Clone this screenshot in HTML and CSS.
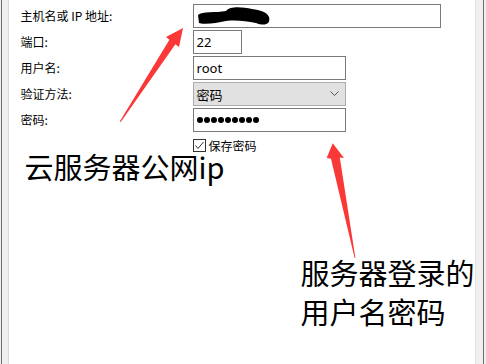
FILE: index.html
```html
<!DOCTYPE html>
<html lang="zh-CN">
<head>
<meta charset="utf-8">
<title>会话设置</title>
<link rel="stylesheet" href="styles.css">
</head>
<body>
<div class="edge-left"></div>
<main class="panel">
  <div class="form">
    <label class="label">主机名或 IP 地址:</label>
    <div class="field field-host">
      <svg class="redact" width="248" height="24" viewBox="0 0 248 24">
        <path d="M4,10 C8,6 22,8 32,6 C36,1 48,2 58,4 C66,5 73,7 75,12 C77,20 70,21 62,18 C52,16 42,15 32,16 C22,18 12,20 5,18 Z" fill="#000"/>
      </svg>
    </div>

    <label class="label">端口:</label>
    <div class="field field-port">22</div>

    <label class="label">用户名:</label>
    <div class="field field-mid">root</div>

    <label class="label">验证方法:</label>
    <div class="field field-mid select">
      <span>密码</span>
      <svg class="chevron" width="9" height="6" viewBox="0 0 9 6"><polyline points="0.5,0.5 4.5,4.5 8.5,0.5" fill="none" stroke="#555" stroke-width="1"/></svg>
    </div>

    <label class="label">密码:</label>
    <div class="field field-mid dots" aria-label="密码">
      <i></i><i></i><i></i><i></i><i></i><i></i><i></i><i></i><i></i>
    </div>
  </div>

  <div class="check-row">
    <svg class="checkbox" width="13" height="13" viewBox="0 0 13 13">
      <rect x="0.5" y="0.5" width="12" height="12" fill="#fff" stroke="#333"/>
      <polyline points="2.5,6.5 5,9.5 10.5,3" fill="none" stroke="#333" stroke-width="1"/>
    </svg>
    <span>保存密码</span>
  </div>

  <p class="note note-ip">云服务器公网ip</p>
  <p class="note note-login">服务器登录的<br>用户名密码</p>

  <svg class="arrows" width="486" height="364" viewBox="0 0 486 364">
    <polygon fill="#fb3838" points="183,28 179,47 175.4,44.2 120.8,122 119.8,121.4 169.4,39.8 166,37"/>
    <polygon fill="#fb3838" points="332.7,143.3 344,158 339.8,157.4 355.4,258 354.6,258 331,158.8 326.7,158"/>
  </svg>
</main>
<div class="edge-right"></div>
</body>
</html>
```

FILE: styles.css
```css
html, body {
  margin: 0;
  padding: 0;
}
body {
  width: 486px;
  height: 364px;
  overflow: hidden;
  display: flex;
  background: #f0f0f0;
  font-family: "Noto Sans CJK SC", "Noto Sans", sans-serif;
  color: #000;
}
.edge-left {
  margin-left: 1px;
  width: 6px;
  border-left: 1px solid #6e6e6e;
  border-right: 1px solid #dadada;
  background: #f0f0f0;
}
.edge-right {
  width: 8px;
  border-left: 1px solid #e3e3e3;
  border-right: 1px solid #6e6e6e;
  margin-right: 2px;
  background: #f0f0f0;
}
.panel {
  flex: 1;
  background: #fff;
  padding: 4px 0 0 12px;
  display: flex;
  flex-direction: column;
}
.form {
  display: grid;
  grid-template-columns: 172px 1fr;
  row-gap: 2px;
  align-items: center;
}
.label {
  font-size: 12px;
  line-height: 14px;
}
.field {
  box-sizing: border-box;
  height: 24px;
  border: 1px solid #7a7a7a;
  background: #fff;
  display: flex;
  align-items: center;
  padding-left: 3px;
  font-family: "Noto Sans", "Noto Sans CJK SC", sans-serif;
  font-size: 13px;
}
.field-host {
  width: 248px;
  padding-left: 0;
  position: relative;
}
.redact {
  position: absolute;
  left: 0;
  top: 0;
}
.field-port { width: 49px; }
.field-mid { width: 153px; }
.select {
  background: #e1e1e1;
  border-color: #adadad;
  justify-content: space-between;
  padding-right: 6px;
  font-family: "Noto Sans CJK SC", sans-serif;
}
.dots {
  gap: 1px;
}
.dots i {
  display: block;
  width: 6px;
  height: 6px;
  border-radius: 50%;
  background: #000;
}
.check-row {
  margin: 7px 0 0 172px;
  display: flex;
  align-items: center;
  gap: 3px;
  font-size: 12px;
  line-height: 13px;
  height: 13px;
}
.checkbox { display: block; }
.note {
  margin: 0;
  font-size: 29px;
}
.note-ip {
  margin-left: 4px;
  line-height: 29px;
}
.note-login {
  margin-top: 72px;
  margin-left: 280px;
  line-height: 39px;
  white-space: nowrap;
}
.arrows {
  position: absolute;
  left: 0;
  top: 0;
  pointer-events: none;
}
```
